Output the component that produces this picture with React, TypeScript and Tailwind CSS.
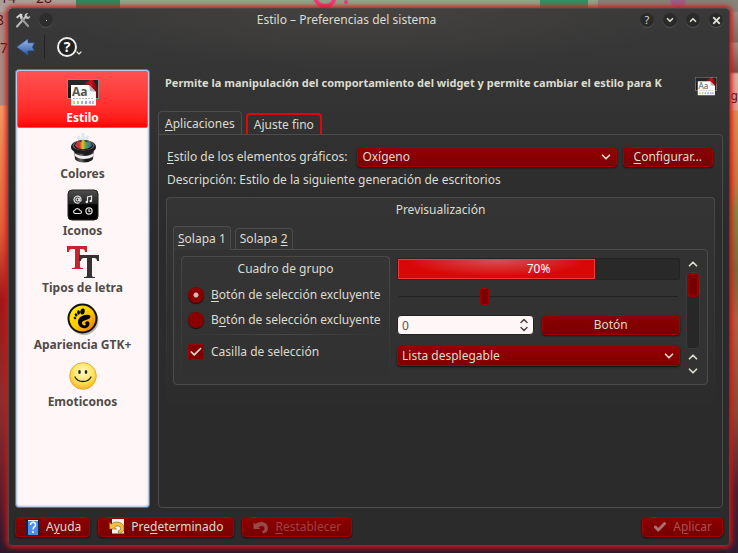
import React from 'react';
import { Check, ChevronDown, ChevronUp, X } from 'lucide-react';

const buttonStyle =
  'flex h-5 items-center justify-center gap-1.5 rounded-sm border border-[#a00000] bg-gradient-to-b from-[#8e0000] to-[#760000] shadow-[0_1px_2px_#111]';

const selectStyle =
  'h-5 w-full appearance-none rounded-sm border border-[#a00000] bg-gradient-to-b from-[#960000] to-[#7c0000] pl-1 pr-6 shadow-[0_1px_2px_#111] outline-none';

const radioStyle =
  'size-4 appearance-none rounded-full bg-[#8a0000] shadow-[0_1px_1px_#111] checked:bg-[radial-gradient(circle,#dcb8b8_2px,#8a0000_3px)]';

// "&" stands before the letter that is the keyboard shortcut
const Mnemonic: React.FC<{ text: string }> = ({ text }) => {
  const [before, after] = text.split('&');
  return (
    <span>
      {before}
      <span className="underline underline-offset-2">{after.charAt(0)}</span>
      {after.slice(1)}
    </span>
  );
};

const StyleIcon: React.FC<{ className: string }> = ({ className }) => (
  <svg viewBox="0 0 32 32" className={className} aria-hidden="true">
    <defs>
      <linearGradient id="screen" x1="0" y1="0" x2="1" y2="0">
        <stop offset="0" stopColor="#151515" />
        <stop offset=".5" stopColor="#3a2222" />
        <stop offset=".75" stopColor="#d01020" />
        <stop offset="1" stopColor="#5a0808" />
      </linearGradient>
    </defs>
    <rect x=".5" y="3.5" width="31" height="19" fill="url(#screen)" stroke="#8b8b8b" />
    <path d="M1 4h22l-6 3-5 4H1z" fill="#262626" />
    <path d="M26 4h5v9l-2-4z" fill="#222" />
    <path d="M4 9h18l7 7v13.500H4z" fill="#fafafa" />
    <path d="M22 9l7 7-6-1z" fill="#b5b5b5" />
    <text x="5" y="20" fontSize="12" fill="#555" fontFamily="Open Sans, sans-serif">Aa</text>
    <path d="M6 22.500h21" stroke="#bbb" strokeDasharray="2 1" />
    <rect x="6" y="25" width="2" height="3" fill="#e8c85a" />
    <rect x="10" y="25" width="2" height="3" fill="#a7c98a" />
    <rect x="14" y="25" width="2" height="3" fill="#8fb4e0" />
    <rect x="18" y="25" width="2" height="3" fill="#9a9aee" />
    <rect x="22" y="25" width="2" height="3" fill="#c79aea" />
    <rect x="25" y="25" width="2" height="3" fill="#a8b8e8" />
  </svg>
);

const ColorsIcon = () => (
  <svg viewBox="0 0 32 32" className="size-8" aria-hidden="true">
    <defs>
      <linearGradient id="hat" x1="0" x2="1">
        <stop offset="0" stopColor="#111" />
        <stop offset=".35" stopColor="#666" />
        <stop offset=".6" stopColor="#111" />
        <stop offset="1" stopColor="#333" />
      </linearGradient>
      <linearGradient id="magic" x1="0" x2="1">
        <stop offset="0" stopColor="#c04080" />
        <stop offset=".25" stopColor="#ee3030" />
        <stop offset=".45" stopColor="#f4d030" />
        <stop offset=".65" stopColor="#50b850" />
        <stop offset="1" stopColor="#4060e0" />
      </linearGradient>
    </defs>
    <path d="M11 4l3 6M16 1v8M21 4l-3 6" stroke="#9ccbe8" strokeWidth="3" opacity=".35" />
    <path d="M7 17l1 10c2 4.500 16 4.500 18 0l1-10z" fill="url(#hat)" />
    <path d="M7.500 21c4 4 15 4 19 0v3c-4 4-15 4-18.500 0z" fill="#eee" />
    <ellipse cx="16.500" cy="15" rx="12.500" ry="7" fill="#1c1c1c" />
    <ellipse cx="16.500" cy="13.500" rx="11" ry="5" fill="#606060" />
    <ellipse cx="16.500" cy="13.500" rx="9.500" ry="4.500" fill="#2a1515" />
    <path d="M8 13l3-4 3 1 2-3 3 3 4-1 2 4c-2 5-15 6-17 0z" fill="url(#magic)" opacity=".9" />
  </svg>
);

const IconsIcon = () => (
  <svg viewBox="0 0 32 32" className="size-8" aria-hidden="true">
    <defs>
      <linearGradient id="tile" x1="0" x2="0" y1="0" y2="1">
        <stop offset="0" stopColor="#505050" />
        <stop offset=".45" stopColor="#222" />
        <stop offset=".5" stopColor="#000" />
      </linearGradient>
    </defs>
    <rect x="1" y="1" width="30" height="30" rx="4" fill="url(#tile)" stroke="#222" />
    <g fill="none" stroke="#e4e4e4" strokeWidth="1.200">
      <path d="M12.500 13.500a3.500 3.500 0 1 1 1.500-3v1c0 1-1.800 1-1.800 0V9" />
      <circle cx="10.500" cy="10.500" r="1.500" />
      <path d="M20.500 13V8l4-1v5" />
      <path d="M8 24.500h5a1.500 1.500 0 0 0 0-3 2.800 2.800 0 0 0-5-.5 1.800 1.800 0 0 0 0 3.500z" />
      <circle cx="22" cy="22" r="3.100" />
      <path d="M22 20v2.300h1.500" />
    </g>
    <circle cx="19.800" cy="13" r="1.300" fill="#e4e4e4" />
    <circle cx="23.800" cy="12" r="1.300" fill="#e4e4e4" />
  </svg>
);

const FontsIcon = () => (
  <svg viewBox="0 0 32 32" className="size-8" aria-hidden="true">
    <path d="M0 0h20v6h-2c0-2-1-3-3-3h-2v17c0 2 1 2 3 2v1H5v-1c2 0 3 0 3-2V3H5C3 3 2 4 2 6H0z" fill="#c2272f" />
    <path d="M12 9h20v6h-2c0-2-1-3-3-3h-2v17c0 2 1 2 3 2v1H17v-1c2 0 3 0 3-2V12h-3c-2 0-3 1-3 3h-2z" fill="#333" />
  </svg>
);

const GtkIcon = () => (
  <svg viewBox="0 0 32 32" className="size-8" aria-hidden="true">
    <defs>
      <linearGradient id="gtk" x1="0" y1="0" x2="1" y2="1">
        <stop offset=".1" stopColor="#fff000" />
        <stop offset=".55" stopColor="#ffc400" />
        <stop offset="1" stopColor="#e86800" />
      </linearGradient>
    </defs>
    <circle cx="17" cy="17.500" r="14.500" fill="#999" opacity=".7" />
    <circle cx="15.500" cy="15.500" r="14" fill="url(#gtk)" stroke="#111" strokeWidth="2" />
    <g fill="#000">
      <ellipse cx="15.500" cy="8.500" rx="2.200" ry="3.100" transform="rotate(10 15.500 8.500)" />
      <ellipse cx="11.500" cy="9.500" rx="1.400" ry="2.200" />
      <ellipse cx="9" cy="12" rx="1.200" ry="1.700" transform="rotate(-25 9 12)" />
      <ellipse cx="8" cy="15" rx="1" ry="1.400" transform="rotate(-40 8 15)" />
      <path d="M22 12c-5-1-11 2-11 7 0 4 4 7 8 6 3-1 4-4 3-6-1-1-3-1-4 1 0 1 1 1 1 2-2 1-4 0-4-2 0-3 6-3 8-5 1-1 0-3-1-3z" />
    </g>
  </svg>
);

const SmileIcon = () => (
  <svg viewBox="0 0 32 32" className="size-8" aria-hidden="true">
    <defs>
      <radialGradient id="smile" cx=".5" cy=".35" r=".65">
        <stop offset="0" stopColor="#fff8c8" />
        <stop offset=".6" stopColor="#fde45c" />
        <stop offset="1" stopColor="#f4b428" />
      </radialGradient>
    </defs>
    <circle cx="16" cy="16" r="13.300" fill="url(#smile)" stroke="#eba83a" />
    <ellipse cx="12.500" cy="12" rx="1.300" ry="2" fill="#222" />
    <ellipse cx="19" cy="12" rx="1.300" ry="2" fill="#222" />
    <path d="M8 17c3 6 13 6 16 0" fill="none" stroke="#222" strokeWidth="1.300" strokeLinecap="round" />
  </svg>
);

const ToolsIcon = () => (
  <svg viewBox="0 0 16 16" className="size-4" aria-hidden="true">
    <path d="M2 14.500L10.500 5" stroke="#b8b8b8" strokeWidth="2" strokeLinecap="round" />
    <path d="M9.500 4.500c0-2 1-3.500 3.500-3.500l-1.500 2.500 1.500 1.500 2.200-1c0 2.500-2.200 3.500-4.200 2.500z" fill="#c8c8c8" />
    <path d="M6 6l7 8" stroke="#999" strokeWidth="2.200" strokeLinecap="round" />
    <path d="M1 5l4.500-3.500 2.500 1-1 .5 1 2.500L6 7 4.500 4.500 2.500 6.500z" fill="#d4d4d4" />
  </svg>
);

const HelpBookIcon = () => (
  <svg viewBox="0 0 16 16" className="size-4" aria-hidden="true">
    <rect x="1" y="0" width="14" height="16" fill="#102850" />
    <rect x="4" y="1" width="10" height="15" fill="#4a8fe6" />
    <path d="M4 1h10v1H4z" fill="#dbe8fa" />
    <path d="M6.500 6c0-4 5.500-3.500 5 0-.3 2-2.500 2-2.500 4.500M9 12v2" fill="none" stroke="#fff" strokeWidth="1.500" />
  </svg>
);

const UndoIcon: React.FC<{ page?: boolean }> = ({ page }) => (
  <svg viewBox="0 0 16 16" className="size-4" aria-hidden="true">
    {page && <path d="M3 0h12v14.500H3z" fill="#f4f4f4" />}
    <path
      d="M.5 3.500l2 1.500c4-3.500 12-2.500 12.500 4 .2 3-2 5-5 5.500l-1-2.500c3.500-.5 3.500-5-.5-5-1.500 0-2.500.8-3 1.500l2 1.500H.5z"
      fill={page ? '#f0c040' : '#994848'}
      stroke={page ? '#806010' : 'none'}
      strokeWidth=".6"
    />
  </svg>
);

const BackIcon = () => (
  <svg viewBox="0 0 20 18" className="h-[18px] w-5" aria-hidden="true">
    <defs>
      <linearGradient id="back" x1="0" y1="0" x2="0" y2="1">
        <stop offset="0" stopColor="#9bbcec" />
        <stop offset="1" stopColor="#2a55a0" />
      </linearGradient>
    </defs>
    <path d="M.5 9L12 .8v4h6.500L16.500 9l2 4H12v4.500z" fill="url(#back)" stroke="#24457c" strokeWidth=".7" />
  </svg>
);

const modules = [
  { name: 'Estilo', icon: <StyleIcon className="size-8" /> },
  { name: 'Colores', icon: <ColorsIcon /> },
  { name: 'Iconos', icon: <IconsIcon /> },
  { name: 'Tipos de letra', icon: <FontsIcon /> },
  { name: 'Apariencia GTK+', icon: <GtkIcon /> },
  { name: 'Emoticonos', icon: <SmileIcon /> }
];

const windowButtons = [
  { label: 'Ayuda', icon: <span className="text-[11px]">?</span> },
  { label: 'Minimizar', icon: <ChevronDown size={10} strokeWidth={4} /> },
  { label: 'Maximizar', icon: <ChevronUp size={10} strokeWidth={4} /> },
  { label: 'Cerrar', icon: <X size={11} strokeWidth={4} /> }
];

const Wallpaper = () => (
  <div className="absolute inset-0 overflow-hidden bg-[linear-gradient(#a98b85_0,#a98b85_105px,#f59a63_106px,#e0603a_230px,#a01818_300px,#8a3030_400px,#5a1c2c_500px,#281a2c)] text-[#5a1010]">
    <div className="absolute inset-x-0 top-0 h-3 bg-[#8da78a]" />
    <div className="absolute top-0 left-0 h-3 w-19 bg-[#a9a199]" />
    <div className="absolute top-0 left-19 h-3 w-11 bg-[#2f8a60]" />
    <div className="absolute top-0 left-[540px] h-3 w-12 bg-[#2f9264]" />
    <div className="absolute top-0 right-0 h-3 w-35 bg-[#85837a]" />
    <div className="absolute -top-2.5 left-0 text-sm leading-4">14</div>
    <div className="absolute -top-2.5 left-9 text-sm leading-4">28</div>
    <div className="absolute top-3 -left-1 text-sm leading-4">8</div>
    <div className="absolute top-10 left-0 text-sm leading-4">7</div>
    <div className="absolute -top-4 left-[313px] size-6 rounded-full border-4 border-[#f03a80]" />
    <div className="absolute top-0 left-[344px] size-1 rounded-full bg-[#f03a80]" />
    <div className="absolute top-0 left-[670px] h-2 w-4 rounded-b-full bg-[#9a6088]" />
    <div className="absolute top-3 right-0 h-full w-3 bg-[linear-gradient(#9a8f85_0,#7d6a60_30px,#a58e80_31px,#7a5048_60px,#dcb0a0_62px,#e0a090_98px,#dd8f50_99px,#c97840_170px,#8a8340_200px,#7c6a38_260px,#b06040_310px,#8a4a34_400px,#4a2030_480px,#281c34)]" />
    <div className="absolute top-22 right-0 text-xs leading-4 underline">g</div>
  </div>
);

const App: React.FC = () => {
  const progress = 70;

  return (
    <div className="relative flex min-h-screen px-2 pt-2 pb-[7px] font-['Noto_Sans',sans-serif] text-[12px] leading-4 text-[#dcdccf]">
      <Wallpaper />
      <div className="relative flex min-w-0 flex-1 flex-col rounded-sm border border-[#4c4644] bg-[radial-gradient(ellipse_320px_60px_at_50%_0,#454240,transparent),linear-gradient(#393939,#2b2b2b_220px)] px-1.5 pb-2 shadow-[0_0_5px_2px_#d01414]">
        <header className="flex h-5 items-center pt-0.5">
          <ToolsIcon />
          <button aria-label="Menú" className="ml-2 flex size-3.5 items-center justify-center rounded-full bg-[#2d2d2d] shadow-[0_1px_1px_#555]">
            <span className="size-px bg-[#ddd]" />
          </button>
          <h1 className="flex-1 text-center">Estilo – Preferencias del sistema</h1>
          <div className="flex gap-[9px]">
            {windowButtons.map((button) => (
              <button
                key={button.label}
                aria-label={button.label}
                className="flex size-3.5 items-center justify-center rounded-full bg-[#2a2a2a] shadow-[0_1px_1px_#555]"
              >
                {button.icon}
              </button>
            ))}
          </div>
        </header>

        <div className="flex h-9 items-center pl-px">
          <button aria-label="Atrás">
            <BackIcon />
          </button>
          <div className="ml-2 h-6 w-px bg-[#222]" />
          <button aria-label="Ayuda" className="ml-3 flex items-end">
            <span className="flex size-5 items-center justify-center rounded-full border-2 border-[#eee] bg-[#222] text-sm font-bold text-white">?</span>
            <ChevronDown size={8} strokeWidth={4} className="-ml-0.5" />
          </button>
        </div>

        <div className="mt-1 flex flex-1 gap-2">
          <nav className="w-[135px] shrink-0 rounded-sm border border-[#4a78b8] bg-[#fff7f7] p-px shadow-[inset_0_0_2px_1px_#a8bcdc]">
            {modules.map((module, index) => (
              <button
                key={module.name}
                className={
                  index === 0
                    ? 'flex h-[57px] w-full flex-col items-center rounded-xs border border-[#ff5050] bg-gradient-to-b from-[#ff5050] to-[#ff0000] pt-1 font-bold text-white'
                    : 'flex h-[57px] w-full flex-col items-center pt-1 font-bold text-[#4f4b4a]'
                }
              >
                {module.icon}
                <span className="mt-0.5">{module.name}</span>
              </button>
            ))}
          </nav>

          <main className="flex min-w-0 flex-1 flex-col">
            <div className="flex h-[42px] gap-1 pt-1.5 pr-1.5 pl-[7px]">
              <h2 className="min-w-0 flex-1 text-[11px] font-bold whitespace-nowrap">
                Permite la manipulación del comportamiento del widget y permite cambiar el estilo para K
              </h2>
              <StyleIcon className="size-[22px]" />
            </div>

            <div role="tablist" className="flex items-end gap-1">
              <button role="tab" aria-selected="true" className="-mb-px h-6 rounded-t-sm border border-b-0 border-[#4d4c4c] bg-[#343434] px-1.5">
                <Mnemonic text="&Aplicaciones" />
              </button>
              <button role="tab" aria-selected="false" className="h-[21px] rounded-t-sm border-2 border-b-0 border-[#dd0808] px-1.5">
                Ajuste fino
              </button>
            </div>

            <section className="flex-1 rounded-sm rounded-tl-none border border-[#4d4c4c] px-[7px] pt-3">
              <div className="flex items-center">
                <label htmlFor="style" className="mr-2.5 pl-px">
                  <Mnemonic text="&Estilo de los elementos gráficos:" />
                </label>
                <div className="relative flex-1">
                  <select id="style" className={selectStyle}>
                    <option>Oxígeno</option>
                  </select>
                  <ChevronDown size={14} strokeWidth={3} className="pointer-events-none absolute top-[3px] right-1" />
                </div>
                <button className={`${buttonStyle} mr-0.5 ml-1.5 px-2.5`}>
                  <Mnemonic text="&Configurar..." />
                </button>
              </div>
              <p className="mt-[5px] pl-px">Descripción: Estilo de la siguiente generación de escritorios</p>

              <div className="mt-[9px] rounded-sm bg-gradient-to-b from-[#4a4948] to-transparent p-px">
                <div className="rounded-sm bg-gradient-to-b from-[#353434] to-[#2c2c2c] px-1.5 pt-1 pb-5">
                  <h3 className="text-center">Previsualización</h3>
                  <div role="tablist" className="mt-2 flex items-end gap-1">
                    <button role="tab" aria-selected="true" className="-mb-px h-6 rounded-t-sm border border-b-0 border-[#4d4c4c] bg-[#383737] px-1">
                      <Mnemonic text="&Solapa 1" />
                    </button>
                    <button role="tab" aria-selected="false" className="h-[21px] rounded-t-sm border border-b-0 border-[#4d4c4c] px-1">
                      <Mnemonic text="Solapa &2" />
                    </button>
                  </div>
                  <div className="flex rounded-sm rounded-tl-none border border-[#4d4c4c] bg-[#333232] py-1.5 pr-[7px] pl-[7px]">
                    <div className="h-[122px] w-[209px] shrink-0 rounded-sm bg-gradient-to-b from-[#4a4948] to-transparent p-px">
                      <fieldset className="h-full rounded-sm bg-gradient-to-b from-[#363535] to-[#323131] px-1.5 pt-1">
                        <legend className="float-left mb-2.5 w-full text-center">Cuadro de grupo</legend>
                        <label className="clear-both flex items-center gap-[7px]">
                          <input type="radio" name="choice" defaultChecked className={radioStyle} />
                          <Mnemonic text="&Botón de selección excluyente" />
                        </label>
                        <label className="mt-[9px] flex items-center gap-[7px]">
                          <input type="radio" name="choice" className={radioStyle} />
                          <Mnemonic text="B&otón de selección excluyente" />
                        </label>
                        <div className="mt-1.5 h-px bg-gradient-to-r from-transparent via-[#4b4a4a] to-transparent" />
                        <label className="relative mt-[9px] flex items-center gap-[7px]">
                          <input type="checkbox" defaultChecked className="size-4 appearance-none rounded-xs border border-[#a00000] bg-[#800000]" />
                          <Check size={14} strokeWidth={3} className="pointer-events-none absolute left-px" />
                          Casilla de selección
                        </label>
                      </fieldset>
                    </div>

                    <div className="ml-[7px] flex min-w-0 flex-1 flex-col">
                      <div
                        role="progressbar"
                        aria-label="Progreso"
                        aria-valuenow={progress}
                        className="relative mt-0.5 h-[22px] rounded-xs border border-[#242424] bg-[#292929]"
                      >
                        <div
                          className="h-full border border-[#f03a3a] bg-[radial-gradient(ellipse_at_50%_0,#d85050,#d80808_65%)]"
                          style={{ width: `${progress}%` }}
                        />
                        <span className="absolute inset-0 text-center leading-5 text-white">{progress}%</span>
                      </div>
                      <input
                        type="range"
                        aria-label="Deslizador"
                        defaultValue={30}
                        className="mx-0.5 mt-1.5 h-5 appearance-none bg-[linear-gradient(#222,#222)] bg-[length:100%_1px] bg-center bg-no-repeat [&::-webkit-slider-thumb]:h-[17px] [&::-webkit-slider-thumb]:w-[9px] [&::-webkit-slider-thumb]:appearance-none [&::-webkit-slider-thumb]:rounded-xs [&::-webkit-slider-thumb]:border [&::-webkit-slider-thumb]:border-[#a00000] [&::-webkit-slider-thumb]:bg-[#7c0000]"
                      />
                      <div className="mt-[9px] flex gap-2">
                        <div className="relative flex-1">
                          <input type="text" aria-label="Valor" defaultValue="0" className="h-5 w-full rounded-sm border border-[#222] bg-[#fff7f7] px-1 text-[#555]" />
                          <ChevronUp size={12} strokeWidth={3} className="absolute top-0 right-1 text-[#444]" />
                          <ChevronDown size={12} strokeWidth={3} className="absolute right-1 bottom-0 text-[#444]" />
                        </div>
                        <button className={`${buttonStyle} flex-1`}>Botón</button>
                      </div>
                      <div className="relative mt-[11px]">
                        <select aria-label="Lista" className={selectStyle}>
                          <option>Lista desplegable</option>
                        </select>
                        <ChevronDown size={14} strokeWidth={3} className="pointer-events-none absolute top-[3px] right-1" />
                      </div>
                    </div>

                    <div className="ml-1.5 flex w-3.5 flex-col items-center">
                      <ChevronUp size={14} strokeWidth={3} className="my-px" />
                      <div className="w-3.5 flex-1 rounded-sm border border-[#3c3b3b] bg-[#272727]">
                        <div className="h-6 rounded-sm border-2 border-[#960000] bg-[#760000]" />
                      </div>
                      <ChevronUp size={14} strokeWidth={3} className="mt-px" />
                      <ChevronDown size={14} strokeWidth={3} />
                    </div>
                  </div>
                </div>
              </div>
            </section>
          </main>
        </div>

        <footer className="mt-[9px] flex gap-2">
          <button className={`${buttonStyle} px-2`}>
            <HelpBookIcon />
            <Mnemonic text="A&yuda" />
          </button>
          <button className={`${buttonStyle} px-2.5`}>
            <UndoIcon page />
            <Mnemonic text="Pre&determinado" />
          </button>
          <button disabled className={`${buttonStyle} px-2.5 text-[#a04040]`}>
            <UndoIcon />
            <Mnemonic text="&Restablecer" />
          </button>
          <button disabled className={`${buttonStyle} ml-auto px-2.5 text-[#a85050]`}>
            <Check size={14} strokeWidth={5} className="text-[#aa7070]" />
            <Mnemonic text="A&plicar" />
          </button>
        </footer>
      </div>
    </div>
  );
};

export default App;
